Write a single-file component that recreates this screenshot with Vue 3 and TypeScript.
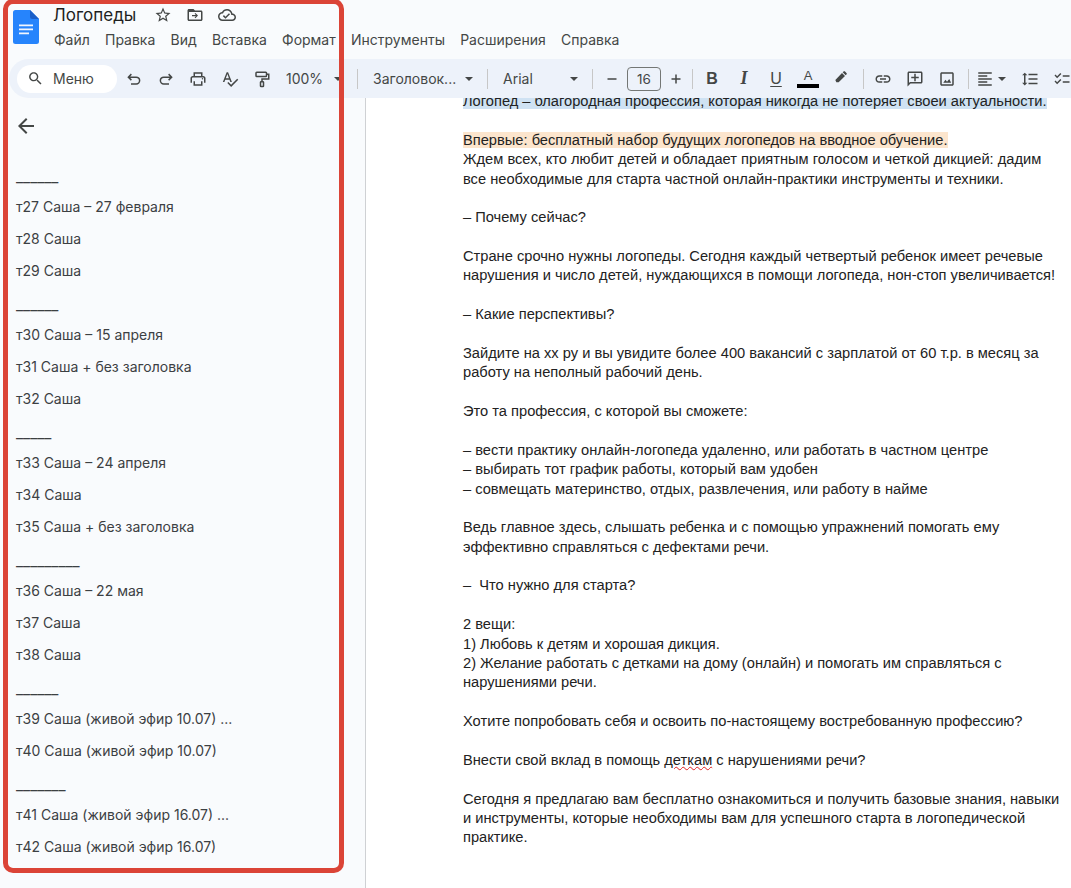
<script setup lang="ts">
const menu = ['Файл', 'Правка', 'Вид', 'Вставка', 'Формат', 'Инструменты', 'Расширения', 'Справка']
const outline: string[] = [
  '______', 'т27 Саша – 27 февраля', 'т28 Саша', 'т29 Саша',
  '______', 'т30 Саша – 15 апреля', 'т31 Саша + без заголовка', 'т32 Саша',
  '_____', 'т33 Саша – 24 апреля', 'т34 Саша', 'т35 Саша + без заголовка',
  '_________', 'т36 Саша – 22 мая', 'т37 Саша', 'т38 Саша',
  '______', 'т39 Саша (живой эфир 10.07) ...', 'т40 Саша (живой эфир 10.07)',
  '_______', 'т41 Саша (живой эфир 16.07) ...', 'т42 Саша (живой эфир 16.07)',
]
const docLines: string[] = [
  'Ждем всех, кто любит детей и обладает приятным голосом и четкой дикцией: дадим',
  'все необходимые для старта частной онлайн-практики инструменты и техники.',
  '',
  '– Почему сейчас?',
  '',
  'Стране срочно нужны логопеды. Сегодня каждый четвертый ребенок имеет речевые',
  'нарушения и число детей, нуждающихся в помощи логопеда, нон-стоп увеличивается!',
  '',
  '– Какие перспективы?',
  '',
  'Зайдите на хх ру и вы увидите более 400 вакансий с зарплатой от 60 т.р. в месяц за',
  'работу на неполный рабочий день.',
  '',
  'Это та профессия, с которой вы сможете:',
  '',
  '– вести практику онлайн-логопеда удаленно, или работать в частном центре',
  '– выбирать тот график работы, который вам удобен',
  '– совмещать материнство, отдых, развлечения, или работу в найме',
  '',
  'Ведь главное здесь, слышать ребенка и с помощью упражнений помогать ему',
  'эффективно справляться с дефектами речи.',
  '',
  '–  Что нужно для старта?',
  '',
  '2 вещи:',
  '1) Любовь к детям и хорошая дикция.',
  '2) Желание работать с детками на дому (онлайн) и помогать им справляться с',
  'нарушениями речи.',
  '',
  'Хотите попробовать себя и освоить по-настоящему востребованную профессию?',
  '',
]
const tailLines: string[] = [
  '',
  'Сегодня я предлагаю вам бесплатно ознакомиться и получить базовые знания, навыки',
  'и инструменты, которые необходимы вам для успешного старта в логопедической',
  'практике.',
]
</script>

<template>
  <div class="page">
    <header class="top">
      <svg class="logo" width="26" height="34" viewBox="0 0 26 34">
        <path d="M2.5 0H17l9 9v22.5a2.5 2.5 0 0 1-2.5 2.5h-21A2.5 2.5 0 0 1 0 31.5v-29A2.5 2.5 0 0 1 2.5 0z" fill="#2684fc" />
        <path d="M17 0l9 9h-6.5A2.5 2.5 0 0 1 17 6.500z" fill="#1a5fc8" />
        <path d="M6 14.500h14v1.700H6zM6 18.500h14v1.700H6zM6 22.500h10v1.700H6z" fill="#f1f6fe" />
      </svg>
      <div class="titles">
        <div class="title-row">
          <span class="doc-title">Логопеды</span>
          <span class="title-icons">
            <svg class="ic" viewBox="0 0 24 24"><path d="M22 9.240l-7.190-.62L12 2 9.190 8.630 2 9.240l5.460 4.730L5.820 21 12 17.270 18.180 21l-1.630-7.030L22 9.240zM12 15.400l-3.760 2.270 1-4.280-3.320-2.880 4.380-.38L12 6.100l1.710 4.040 4.380.38-3.320 2.880 1 4.280L12 15.400z" /></svg>
            <svg class="ic" viewBox="0 0 24 24"><path d="M20 6h-8l-2-2H4c-1.100 0-2 .9-2 2v12c0 1.100.9 2 2 2h16c1.100 0 2-.9 2-2V8c0-1.100-.9-2-2-2zm0 12H4V8h16v10z" /><path d="M8 12h5.200l-1.700-1.700 1-1 3.500 3.500-3.500 3.500-1-1 1.700-1.700H8z" /></svg>
            <svg class="ic" viewBox="0 0 24 24"><path d="M19.350 10.040C18.670 6.590 15.640 4 12 4 9.110 4 6.600 5.640 5.350 8.040 2.340 8.360 0 10.910 0 14c0 3.310 2.690 6 6 6h13c2.760 0 5-2.240 5-5 0-2.640-2.050-4.780-4.650-4.960zM19 18H6c-2.210 0-4-1.790-4-4 0-2.050 1.530-3.760 3.560-3.970l1.070-.11.5-.95C8.080 7.140 9.940 6 12 6c2.620 0 4.880 1.860 5.390 4.430l.3 1.500 1.530.11c1.560.1 2.780 1.410 2.780 2.960 0 1.650-1.350 3-3 3zm-9-3.820l-2.090-2.090L6.500 13.500 10 17l6.010-6.010-1.410-1.410z" /></svg>
          </span>
        </div>
        <nav class="menu"><span v-for="m in menu" :key="m">{{ m }}</span></nav>
      </div>
    </header>

    <div class="toolbar">
      <div class="search">
        <svg class="ic search-ic" viewBox="0 0 24 24"><path d="M15.500 14h-.79l-.28-.27C15.410 12.590 16 11.110 16 9.500 16 5.910 13.090 3 9.500 3S3 5.910 3 9.500 5.910 16 9.500 16c1.610 0 3.090-.59 4.230-1.570l.27.28v.79l5 4.990L20.490 19l-4.990-5zm-6 0C7.010 14 5 11.990 5 9.500S7.010 5 9.500 5 14 7.010 14 9.500 11.990 14 9.500 14z" /></svg>
        <span>Меню</span>
      </div>
      <span class="btn"><svg class="ic line" viewBox="0 0 24 24"><path d="M8.500 5.500L4.500 9.500l4 4M4.500 9.500H15a4.500 4.500 0 0 1 0 9H8" /></svg></span>
      <span class="btn"><svg class="ic line" viewBox="0 0 24 24"><path d="M15.500 5.500l4 4-4 4M19.500 9.500H9a4.500 4.500 0 0 0 0 9h7" /></svg></span>
      <span class="btn"><svg class="ic" viewBox="0 0 24 24"><path d="M19 8h-1V3H6v5H5c-1.660 0-3 1.340-3 3v6h4v4h12v-4h4v-6c0-1.660-1.340-3-3-3zM8 5h8v3H8V5zm8 14H8v-4h8v4zm2-2v-2H6v2H4v-6c0-.55.45-1 1-1h14c.55 0 1 .45 1 1v6h-2z" /><circle cx="18" cy="11.500" r="1" /></svg></span>
      <span class="btn"><svg class="ic" viewBox="0 0 24 24"><path d="M12.450 16h2.090L9.430 3H7.570L2.460 16h2.090l1.120-3h5.640l1.140 3zm-6.020-5L8.500 5.480 10.570 11H6.430zm15.160.59l-8.090 8.090L9.830 16l-1.410 1.410 5.090 5.090L23 13l-1.410-1.410z" /></svg></span>
      <span class="btn"><svg class="ic line" viewBox="0 0 24 24"><rect x="4" y="3" width="14" height="5.500" rx="1" /><path d="M18 5.700h3v6.300h-9v3.500" /><rect x="10" y="15.500" width="4" height="6.500" rx=".8" /></svg></span>
      <span class="zoom"><span>100%</span><i class="caret" /></span>
      <i class="sep" />
      <span class="select style-select"><span>Заголовок...</span><i class="caret" /></span>
      <i class="sep" />
      <span class="select font-select"><span>Arial</span><i class="caret" /></span>
      <i class="sep sep-size" />
      <span class="size">
        <svg class="ic" viewBox="0 0 24 24"><path d="M6 11h12v2H6z" /></svg>
        <span class="size-box">16</span>
        <svg class="ic" viewBox="0 0 24 24"><path d="M18 13h-5v5h-2v-5H6v-2h5V6h2v5h5v2z" /></svg>
      </span>
      <i class="sep sep-b" />
      <span class="btn glyph bold">B</span>
      <span class="btn glyph ital">I</span>
      <span class="btn glyph under">U</span>
      <span class="btn color-a"><span>A</span><i /></span>
      <span class="btn"><svg class="ic pencil" viewBox="0 0 24 24"><path d="M5 16.500l1.500 3.500H10l9.500-9.500-4.500-4.500zM16 5l4.500 4.500 1.500-1.800c.4-.4.4-1 0-1.400l-2.800-2.800c-.4-.4-1-.4-1.400 0z" /></svg></span>
      <i class="sep sep-link" />
      <span class="btn"><svg class="ic" viewBox="0 0 24 24"><path d="M3.900 12c0-1.710 1.390-3.100 3.100-3.100h4V7H7c-2.760 0-5 2.240-5 5s2.240 5 5 5h4v-1.900H7c-1.710 0-3.100-1.390-3.100-3.100zM8 13h8v-2H8v2zm9-6h-4v1.900h4c1.710 0 3.100 1.390 3.100 3.100s-1.390 3.100-3.100 3.100h-4V17h4c2.760 0 5-2.240 5-5s-2.240-5-5-5z" /></svg></span>
      <span class="btn"><svg class="ic" viewBox="0 0 24 24"><path d="M2 4c0-1.100.9-2 2-2h16c1.100 0 2 .9 2 2v12c0 1.100-.9 2-2 2H6l-4 4V4zm2 13.170L5.170 16H20V4H4v13.170zM11 5h2v4h4v2h-4v4h-2v-4H7V9h4z" /></svg></span>
      <span class="btn"><svg class="ic" viewBox="0 0 24 24"><path d="M19 5v14H5V5h14m0-2H5c-1.100 0-2 .9-2 2v14c0 1.100.9 2 2 2h14c1.100 0 2-.9 2-2V5c0-1.100-.9-2-2-2z" /><path d="M7 17l3-4 2 2.500 3-3.500 2.500 5z" /></svg></span>
      <i class="sep sep-align" />
      <span class="align">
        <svg class="ic" viewBox="0 0 24 24"><path d="M3 3h18v2H3zM3 7h12v2H3zM3 11h18v2H3zM3 15h12v2H3zM3 19h18v2H3z" /></svg>
        <i class="caret" />
      </span>
      <span class="btn"><svg class="ic" viewBox="0 0 24 24"><path d="M6 7h2.500L5 3.500 1.500 7H4v10H1.500L5 20.500 8.500 17H6V7zm4-2v2h12V5H10zm0 14h12v-2H10v2zm0-6h12v-2H10v2z" /></svg></span>
      <span class="btn"><svg class="ic" viewBox="0 0 24 24"><path d="M22 7h-9v2h9V7zm0 8h-9v2h9v-2zM5.540 11L2 7.460l1.410-1.410 2.120 2.120 4.240-4.240 1.410 1.410L5.540 11zm0 8L2 15.460l1.410-1.410 2.120 2.120 4.240-4.240 1.410 1.410L5.540 19z" /></svg></span>
    </div>

    <div class="body">
      <aside class="side">
        <svg class="back" viewBox="0 0 24 24"><path d="M20 11H7.830l5.590-5.590L12 4l-8 8 8 8 1.410-1.410L7.830 13H20v-2z" /></svg>
        <ul class="outline">
          <li v-for="(o, i) in outline" :key="i" :class="{ rule: o.startsWith('_') }">{{ o }}</li>
        </ul>
      </aside>
      <main class="doc">
        <div class="sheet">
          <p><span class="hl-blue">Логопед – благородная профессия, которая никогда не потеряет своей актуальности.</span></p>
          <p><br /></p>
          <p><span class="hl-orange">Впервые: бесплатный набор будущих логопедов на вводное обучение.</span></p>
          <p v-for="(l, i) in docLines" :key="i">{{ l }}<br v-if="!l" /></p>
          <p>Внести свой вклад в помощь <span class="squiggle">деткам</span> с нарушениями речи?</p>
          <p v-for="(l, i) in tailLines" :key="'t' + i">{{ l }}<br v-if="!l" /></p>
        </div>
      </main>
    </div>

    <div class="mark" />
  </div>
</template>

<style scoped>
.page {
  position: relative;
  width: 1071px;
  height: 888px;
  overflow: hidden;
  background: #f9fbfd;
  font-family: Inter, "Open Sans", sans-serif;
  color: #3c4043;
}
.top {
  display: flex;
  height: 59px;
  padding: 10px 0 0 13px;
  box-sizing: border-box;
}
.logo { flex: none; }
.titles { margin-left: 15px; margin-top: -10px; }
.title-row { display: flex; align-items: center; height: 30px; }
.doc-title { font-size: 17px; color: #1f1f1f; width: 94px; margin-left: -1px; }
.title-icons { display: flex; gap: 14px; margin-left: 7px; }
.ic { width: 18px; height: 18px; fill: #444746; flex: none; }
.line { fill: none; stroke: #444746; stroke-width: 2; }
.menu { display: flex; gap: 15.200px; font-size: 14px; margin-top: 1px; color: #444746; white-space: nowrap; }

.toolbar {
  position: relative;
  z-index: 2;
  display: flex;
  align-items: center;
  height: 39px;
  margin-left: 9px;
  padding-left: 8px;
  background: #edf2fa;
  border-radius: 20px 0 0 20px;
  white-space: nowrap;
  font-size: 14px;
  color: #444746;
}
.search {
  display: flex;
  align-items: center;
  gap: 9px;
  width: 100px;
  height: 28px;
  padding-left: 10px;
  box-sizing: border-box;
  background: #fff;
  border-radius: 14px;
  margin-right: 1px;
  flex: none;
}
.search-ic { width: 17px; height: 17px; }
.btn { display: flex; align-items: center; justify-content: center; width: 32px; flex: none; }
.caret { width: 0; height: 0; border-left: 4.500px solid transparent; border-right: 4.500px solid transparent; border-top: 4.500px solid #444746; flex: none; }
.zoom { display: flex; align-items: center; width: 72px; padding-left: 8px; box-sizing: border-box; justify-content: space-between; padding-right: 8px; flex: none; }
.sep { width: 1px; height: 20px; background: #c7c7c7; flex: none; margin: 0 7px; }
.sep-size { margin: 0 10px 0 7px; }
.sep-b { margin: 0 3px 0 7px; }
.sep-link { margin: 0 3px 0 7px; }
.sep-align { margin: 0 3px 0 5px; }
.select { display: flex; align-items: center; justify-content: space-between; box-sizing: border-box; padding: 0 7px 0 8px; flex: none; }
.style-select { width: 115px; }
.font-select { width: 90px; }
.size { display: flex; align-items: center; flex: none; width: 82px; justify-content: space-between; }
.size-box { width: 34px; height: 24px; box-sizing: border-box; border: 1px solid #747775; border-radius: 4px; display: flex; align-items: center; justify-content: center; font-size: 13.500px; }
.glyph { font-family: "Liberation Sans", sans-serif; font-size: 16px; color: #444746; }
.bold { font-weight: 700; }
.ital { font-style: italic; font-weight: 700; font-family: "Liberation Serif", serif; font-size: 18px; }
.under { text-decoration: underline; text-underline-offset: 2px; }
.color-a { flex-direction: column; font-size: 13px; font-family: "Liberation Sans", sans-serif; line-height: 14px; }
.color-a i { display: block; width: 22px; height: 4px; background: #000; margin-top: 1px; }
.pencil { width: 16px; height: 16px; margin-top: -4px; }
.align { display: flex; align-items: center; gap: 4px; flex: none; padding-left: 4px; width: 42px; box-sizing: border-box; }

.body { display: flex; height: 790px; }
.side { width: 365px; flex: none; border-right: 1px solid #cfd1d4; padding-top: 16px; }
.back { display: block; width: 24px; height: 24px; fill: #444746; margin-left: 14px; }
.outline { list-style: none; margin: 21px 0 0; padding: 0 0 0 16px; font-size: 14px; }
.outline li { height: 32px; line-height: 32px; white-space: nowrap; }
.outline .rule { font-size: 15.500px; line-height: 36px; }

.doc { flex: 1; background: #fff; overflow: hidden; }
.sheet {
  margin-top: -6px;
  padding-left: 97px;
  font-family: "Liberation Sans", Arial, sans-serif;
  font-size: 14.670px;
  line-height: 19.370px;
  color: #222;
  white-space: pre;
}
.sheet p { margin: 0; }
.hl-blue { background: #cfe2f3; }
.hl-orange { background: #fce5cd; }
.squiggle { text-decoration: underline wavy #e02020; text-decoration-thickness: 1px; text-underline-offset: 1px; }

.mark {
  position: absolute;
  left: 3px;
  top: -1px;
  width: 341px;
  height: 874px;
  box-sizing: border-box;
  border: 5px solid #db4437;
  border-radius: 10px;
  pointer-events: none;
  z-index: 3;
}
</style>
